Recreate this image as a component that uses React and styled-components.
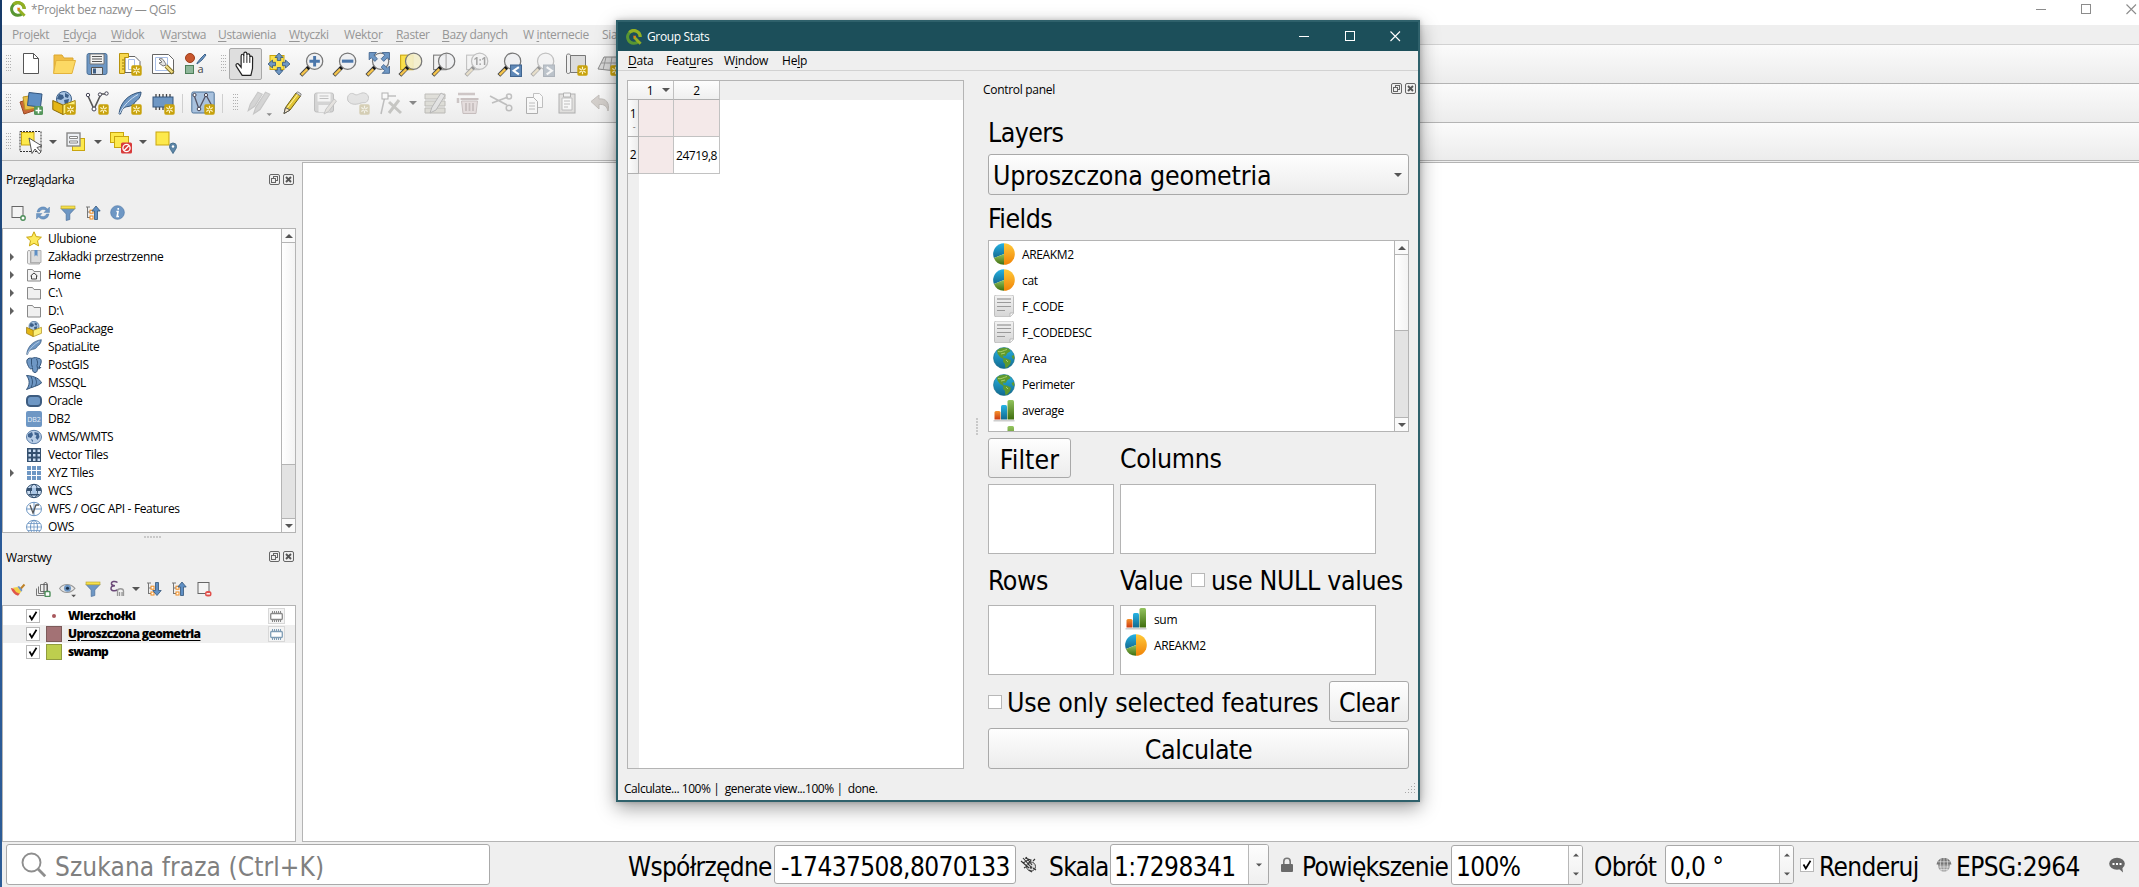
import React from "react";
import styled, { createGlobalStyle, css } from "styled-components";

const Global = createGlobalStyle`
  *, *::before, *::after { box-sizing: border-box; }
  html, body { margin: 0; padding: 0; overflow: hidden; }
  body { font-family: "Open Sans", "Noto Sans", sans-serif; font-size: 12px; color: #000; letter-spacing: -0.35px; }
  svg { display: block; flex: none; }
`;

const BIG = `"DejaVu Sans Condensed", "DejaVu Sans", sans-serif`;

/* ---------- main window ---------- */
const Desktop = styled.div`
  position: relative;
  width: 2139px;
  height: 887px;
  padding-left: 2px;
  overflow: hidden;
  background: linear-gradient(#173a68, #1f4a80 30%, #2a5a98 60%, #2c5c96);
`;
const MainWindow = styled.div`
  display: flex;
  flex-direction: column;
  height: 887px;
  background: #efefef;
`;
const TitleBar = styled.header`
  display: flex;
  align-items: center;
  height: 25px;
  padding: 0 2px 7px 8px;
  background: #fff;
  color: #8c8c8c;
  gap: 5px;
  white-space: nowrap;
`;
const WindowButtons = styled.div`
  display: flex;
  gap: ${(p) => p.$gap}px;
  margin-left: auto;
`;
const MenuBar = styled.nav`
  flex: none;
  display: flex;
  align-items: center;
  height: 20px;
  padding-left: 10px;
  border-bottom: 1px solid #d2d2d2;
  color: ${(p) => p.$color || "#969696"};
`;
const MenuItem = styled.span`
  flex: none;
  width: ${(p) => p.$w}px;
  white-space: nowrap;
  letter-spacing: ${(p) => p.$ls ?? -0.35}px;
  u { text-underline-offset: 2px; }
`;
const ToolRow = styled.div`
  display: flex;
  align-items: center;
  height: ${(p) => p.$h || 39}px;
  padding-left: 4px;
  border-bottom: 1px solid #b4b4b4;
  background: linear-gradient(#fbfbfb, #ececec);
`;
const Grip = styled.i`
  flex: none;
  width: 5px;
  height: 18px;
  margin-left: ${(p) => p.$ml || 0}px;
  margin-right: ${(p) => p.$mr || 0}px;
  background-image: radial-gradient(circle at 0.5px 0.5px, #b0b0b0 0.7px, transparent 0.8px);
  background-size: 2px 3px;
`;
const ToolButton = styled.span`
  flex: none;
  display: flex;
  align-items: center;
  justify-content: center;
  width: ${(p) => p.$w || 33}px;
  height: 32px;
  ${(p) => p.$faded && css`opacity: 0.42; filter: grayscale(0.6);`}
  ${(p) => p.$active && css`
    background: #dedede; border: 1px solid #a8a8a8; border-radius: 2px;
  `}
`;
const Separator = styled.i`
  flex: none;
  width: 1px;
  height: 19px;
  margin: 0 ${(p) => p.$m || 3}px;
  background: #cfcfcf;
`;
const Arrow = styled.i`
  flex: none;
  width: 0;
  height: 0;
  border: ${(p) => p.$s || 4}px solid transparent;
  border-top-color: ${(p) => (p.$up ? "transparent" : p.$c || "#555")};
  border-bottom-color: ${(p) => (p.$up ? p.$c || "#555" : "transparent")};
  transform: translateY(${(p) => (p.$up ? "-25%" : "25%")});
`;
const ArrowSlot = styled.span`
  flex: none;
  display: flex;
  align-items: center;
  justify-content: center;
  width: ${(p) => p.$w}px;
`;
const Workspace = styled.div`
  flex: 1;
  display: flex;
  min-height: 0;
`;
const LeftDock = styled.aside`
  display: flex;
  flex-direction: column;
  width: 300px;
  height: 681px;
`;
const Canvas = styled.main`
  flex: 1;
  height: 680px;
  margin-top: 1px;
  background: #fff;
  border: 1px solid #b4b4b4;
  border-right: 0;
`;
const DockTitle = styled.div`
  flex: none;
  display: flex;
  align-items: center;
  height: ${(p) => p.$h}px;
  padding: 0 ${(p) => p.$pr ?? 8}px 0 ${(p) => p.$pl ?? 4}px;
  letter-spacing: ${(p) => p.$ls ?? -0.35}px;
  span { margin-right: auto; padding-top: 1px; }
  svg + svg { margin-left: 3px; }
`;
const DockTools = styled.div`
  flex: none;
  display: flex;
  align-items: center;
  height: ${(p) => p.$h || 32}px;
  padding-left: 3px;
  ${ToolButton} { width: 25px; }
`;
const TreeBox = styled.div`
  flex: none;
  display: flex;
  width: 294px;
  height: ${(p) => p.$h}px;
  border: 1px solid #b4b4b4;
  background: #fff;
  overflow: hidden;
`;
const TreeList = styled.ul`
  flex: 1;
  margin: 0;
  padding: 1px 0 0;
  list-style: none;
  overflow: hidden;
`;
const TreeRow = styled.li`
  display: flex;
  align-items: center;
  height: 18px;
  padding-left: 7px;
  white-space: nowrap;
  > span { margin-left: 6px; padding-bottom: 1px; line-height: 16px; }
`;
const Expander = styled.i`
  flex: none;
  width: 16px;
  height: 8px;
  &::before {
    content: "";
    display: block;
    width: 0;
    border: 4px solid transparent;
    border-left-color: ${(p) => (p.$show ? "#606060" : "transparent")};
  }
`;
const ScrollBar = styled.div`
  flex: none;
  display: flex;
  flex-direction: column;
  width: 14px;
  border-left: 1px solid #b4b4b4;
  background: #e3e3e3;
`;
const ScrollEnd = styled.i`
  display: flex;
  align-items: center;
  justify-content: center;
  height: 14px;
  background: #fafafa;
  border-${(p) => (p.$up ? "bottom" : "top")}: 1px solid #b4b4b4;
`;
const Thumb = styled.i`
  height: ${(p) => p.$h}px;
  margin-bottom: auto;
  background: linear-gradient(90deg, #fff, #f3f3f3);
  border-bottom: 1px solid #b4b4b4;
`;
const SplitDots = styled.div`
  flex: none;
  height: 7px;
  display: flex;
  justify-content: center;
  align-items: center;
  &::before {
    content: "";
    width: 17px;
    height: 2px;
    background-image: radial-gradient(circle at 1px 1px, #c8c8c8 0.7px, transparent 0.9px);
    background-size: 3px 2px;
  }
`;
const LayerRow = styled.li`
  display: flex;
  align-items: center;
  height: 18px;
  padding: 0 10px 0 23px;
  font-weight: 700;
  white-space: nowrap;
  background: ${(p) => (p.$selected ? "#efefef" : "#fff")};
  > b { margin-left: 6px; margin-right: auto; padding-bottom: 1px; line-height: 16px; font-size: 12px; letter-spacing: ${(p) => p.$ls}px; text-decoration: ${(p) => (p.$selected ? "underline" : "none")}; text-underline-offset: 2px; }
`;
const Check = styled.i`
  flex: none;
  display: flex;
  align-items: center;
  justify-content: center;
  width: 14px;
  height: 14px;
  border: 1px solid #b8b8b8;
  background: #fff;
`;
const Swatch = styled.i`
  flex: none;
  width: 16px;
  height: 16px;
  margin-left: 6px;
  display: flex;
  align-items: center;
  justify-content: center;
  ${(p) => p.$color && css`background: ${p.$color}; border: 1px solid rgba(40, 40, 30, 0.3);`}
  &::before {
    content: "";
    display: ${(p) => (p.$color ? "none" : "block")};
    width: 4px; height: 4px; border-radius: 2px;
    background: #a8575c;
  }
`;
const ChipBox = styled.i`
  display: flex;
  align-items: center;
  justify-content: center;
  width: 17px;
  height: 16px;
  border: 1px solid #d8d8d8;
  background: #f4f4f4;
`;

/* ---------- status bar ---------- */
const StatusBar = styled.footer`
  display: flex;
  align-items: center;
  height: 45px;
  padding-left: 4px;
  font-family: ${BIG};
  font-stretch: condensed;
  font-size: 26px;
  white-space: nowrap;
`;
const SearchBox = styled.div`
  flex: none;
  display: flex;
  align-items: center;
  width: 484px;
  height: 41px;
  margin-right: 138px;
  padding-left: 14px;
  gap: 8px;
  border: 1px solid #aaa;
  border-radius: 3px;
  background: #fff;
  color: #808080;
  letter-spacing: 0.1px;
  > span { padding-top: 5px; }
`;
const StatusText = styled.span`
  flex: none;
  width: ${(p) => p.$w}px;
  padding-top: 5px;
  letter-spacing: ${(p) => p.$ls ?? -0.7}px;
`;
const StatusField = styled.div`
  flex: none;
  display: flex;
  align-items: center;
  width: ${(p) => p.$w}px;
  height: ${(p) => p.$h || 40}px;
  margin-right: ${(p) => p.$mr}px;
  padding-left: ${(p) => p.$pl ?? 5}px;
  border: 1px solid #a8a8a8;
  border-radius: 3px;
  background: #fff;
  overflow: hidden;
  > span { letter-spacing: ${(p) => p.$ls ?? -0.6}px; margin-right: auto; padding-top: 5px; }
`;
const FieldSide = styled.i`
  display: flex;
  flex-direction: column;
  align-items: center;
  justify-content: ${(p) => (p.$spin ? "space-around" : "center")};
  align-self: stretch;
  width: ${(p) => p.$w || 14}px;
  border-left: 1px solid #b8b8b8;
  background: linear-gradient(#fdfdfd, #efefef);
`;
const IconSlot = styled.span`
  flex: none;
  display: flex;
  align-items: center;
  width: ${(p) => p.$w}px;
`;

/* ---------- dialog ---------- */
const Dialog = styled.section`
  position: absolute;
  left: 616px;
  top: 20px;
  width: 804px;
  height: 782px;
  display: flex;
  flex-direction: column;
  border: 2px solid #2f616b;
  background: #efefef;
  box-shadow: 0 6px 18px rgba(0, 0, 0, 0.38), 0 0 5px rgba(0, 0, 0, 0.2);
`;
const DialogTitle = styled.header`
  flex: none;
  display: flex;
  align-items: center;
  height: 29px;
  padding: 0 17px 0 8px;
  gap: 5px;
  background: #1c4f5a;
  color: #fff;
`;
const DialogBody = styled.div`
  flex: 1;
  display: flex;
  min-height: 0;
`;
const TableFrame = styled.div`
  flex: none;
  width: 337px;
  height: 689px;
  margin: 9px 0 0 9px;
  border: 1px solid #b4b4b4;
  background: linear-gradient(90deg, #efefef 11px, #fff 11px);
`;
const HeaderStrip = styled.div`
  display: flex;
  height: 19px;
  background: #efefef;
`;
const HeadCell = styled.div`
  display: flex;
  align-items: center;
  justify-content: center;
  gap: 9px;
  width: ${(p) => p.$w}px;
  padding-left: ${(p) => p.$pl || 0}px;
  background: linear-gradient(#fdfdfd, #efefef);
  border-right: 1px solid #c0c0c0;
  border-bottom: 1px solid #b0b0b0;
`;
const TableRow = styled.div`
  display: flex;
  height: 37px;
`;
const RowHead = styled.div`
  display: flex;
  flex-direction: column;
  align-items: center;
  justify-content: center;
  width: 11px;
  line-height: 16px;
  background: linear-gradient(90deg, #fdfdfd, #ececec);
  border-right: 1px solid #b0b0b0;
  border-bottom: 1px solid #b0b0b0;
  small { height: 8px; font-size: 9px; line-height: 9px; padding-left: 2px; color: #666; }
`;
const Cell = styled.div`
  display: flex;
  align-items: center;
  justify-content: center;
  width: ${(p) => p.$w}px;
  background: ${(p) => (p.$blank ? "#f4e9e9" : "#fff")};
  border-right: 1px solid #c2c2c2;
  border-bottom: 1px solid #c2c2c2;
  letter-spacing: -0.5px;
`;
const DockSplitter = styled.div`
  display: flex;
  align-items: center;
  justify-content: center;
  width: 19px;
  padding: 4px 0 0 6px;
  &::before {
    content: "";
    width: 2px;
    height: 17px;
    background-image: radial-gradient(circle at 1px 1px, #c8c8c8 0.7px, transparent 0.9px);
    background-size: 2px 3px;
  }
`;
const Panel = styled.div`
  flex: 1;
  display: flex;
  flex-direction: column;
`;
const PanelForm = styled.div`
  display: flex;
  flex-direction: column;
  padding: 0 9px 0 5px;
  font-family: ${BIG};
  font-stretch: condensed;
  font-size: 26.5px;
`;
const Heading = styled.div`
  display: flex;
  align-items: center;
  flex: none;
  height: ${(p) => p.$h}px;
  padding-top: ${(p) => p.$pt ?? 3}px;
  line-height: 1;
  white-space: nowrap;
  letter-spacing: ${(p) => p.$ls ?? -0.5}px;
`;
const Button = styled.div`
  flex: none;
  display: flex;
  align-items: center;
  justify-content: center;
  width: ${(p) => p.$w}px;
  height: ${(p) => p.$h || 41}px;
  margin-left: ${(p) => (p.$push ? "auto" : "0")};
  padding-top: 2px;
  border: 1px solid #a9a9a9;
  border-radius: 3px;
  background: linear-gradient(#fefefe, #ececec);
  letter-spacing: ${(p) => p.$ls ?? -0.45}px;
`;
const Combo = styled(Button)`
  justify-content: space-between;
  padding: 1px 6px 0 4px;
`;
const FieldList = styled.div`
  flex: none;
  display: flex;
  width: ${(p) => p.$w}px;
  height: ${(p) => p.$h}px;
  border: 1px solid #b4b4b4;
  background: #fff;
  font-family: "Open Sans", "Noto Sans", sans-serif;
  font-stretch: normal;
  font-size: 12px;
  overflow: hidden;
`;
const FieldItems = styled.div`
  flex: 1;
  padding: 0 0 0 4px;
`;
const FieldItem = styled.div`
  display: flex;
  align-items: center;
  gap: 7px;
  height: 26.1px;
`;
const FormRow = styled.div`
  display: flex;
  align-items: center;
  gap: ${(p) => p.$gap || 0}px;
  margin-top: ${(p) => p.$mt || 0}px;
`;
const FieldCol = styled.div`
  flex: none;
  display: flex;
  width: 132px;
`;
const ValueCol = styled(FieldCol)`
  width: 71px;
`;
const DialogStatus = styled.footer`
  flex: none;
  display: flex;
  align-items: center;
  justify-content: space-between;
  height: 22px;
  padding: 0 2px 1px 6px;
  white-space: pre;
  letter-spacing: -0.45px;
`;

/* ---------- icons ---------- */
const BLUE = "#6e97c4";
const Svg = ({ s = 24, vb = 24, children }) => (
  <svg width={s} height={s} viewBox={`0 0 ${vb} ${vb}`} fill="none">{children}</svg>
);
const Star = ({ x = 13, y = 13 }) => (
  <g transform={`translate(${x} ${y})`}>
    <rect x=".3" y=".3" width="10.4" height="10.4" rx="1.6" fill="#c8a20c" />
    <path d="M5.5 1.8v7.4M2.3 3.6l6.4 3.8M8.7 3.6 2.3 7.4" stroke="#fff6c8" strokeWidth="1.2" />
    <circle cx="5.5" cy="5.5" r="1.1" fill="#c8a20c" />
  </g>
);
const QLogo = ({ s = 16 }) => (
  <Svg s={s} vb={16}>
    <path d="M12.6 12.2A6.3 6.3 0 1 1 14.2 8" stroke="#589632" strokeWidth="3" />
    <path d="M3.4 3.4A6.3 6.3 0 0 1 14.2 8" stroke="#93b023" strokeWidth="3" />
    <path d="M8 8l6.6 6.8" stroke="#93b023" strokeWidth="2.8" />
    <path d="M7 6.8h3.2L8.6 10z" fill="#ee7913" />
  </Svg>
);
const FilePage = () => (<Svg><path d="M4.500 1.500h10l5 5v15h-15z" fill="#fff" stroke="#555" /><path d="M14.500 1.500v5h5" stroke="#555" /></Svg>);
const Folder = () => (<Svg><path d="M2 21V3h8l2 3h9v4" fill="#f0bd45" stroke="#dba72f" /><path d="M1.500 21.500 4 8.500h19.500L20 21.500z" fill="#fcd964" stroke="#e3b33c" /></Svg>);
const Save = () => (<Svg><rect x="2" y="1.500" width="20" height="21" rx="2" fill={BLUE} stroke="#4d7299" /><path d="M5 2h14v10H5z" fill="#f4f4f4" stroke="#777" /><path d="M7 4.500h10M7 7h10M7 9.500h10" stroke="#555" /><path d="M6.500 15.500h11v7h-11z" fill="#dfe5ec" stroke="#555" /><path d="M8 16.500h3v5H8z" fill="#3f5f85" /></Svg>);
const Layout = () => (<Svg><path d="M7 4.500h10l5 5v11H7z" fill="#fff" stroke="#666" /><path d="M10.500 7.500h6v10h-6z" stroke="#a9bfe8" /><path d="M1.500 1.500h9v4h-4v16h-5z" fill="#f7d850" stroke="#b8930c" /><path d="M4 8h2M4 11h2M4 14h2M4 17h2" stroke="#9a7a08" /><Star /></Svg>);
const Manager = () => (<Svg><path d="M1.500 2.500h16l5 5v14h-21z" fill="#fff" stroke="#666" /><path d="M4.500 5.500h12v13h-12z" stroke="#a9bfe8" /><path d="M15 14l7 7" stroke="#7c6a1c" strokeWidth="4" /><path d="M15 14l6.500 6.500" stroke="#f0dc88" strokeWidth="2.400" /><path d="M8 7c3-1 4 0 5 2s2 2 2 4l-3 1-4-3 3-1z" fill="#e4e4e4" stroke="#777" /></Svg>);
const StyleMgr = () => (
  <Svg><circle cx="6" cy="6" r="4.500" fill="#c9572e" stroke="#9e3e1a" /><path d="M13 11l4-5 4-4 1 1-4 5-5 4z" fill={BLUE} stroke="#3f648c" /><rect x="1.500" y="13.500" width="8" height="8" fill="#8fb79a" stroke="#4d7f59" />
    <text x="13.500" y="20.500" fontFamily="Open Sans" fontSize="11" letterSpacing="0" fill="#444">a</text></Svg>
);
const Hand = () => (<Svg s={26}><path d="M8.500 22.500 3 14c-1-2 1-3 2-2l2.500 3V4.500c0-2 2.500-2 2.500 0V2.500c0-2 2.800-2 2.800 0V4c0-2 2.700-1.800 2.700 0v2c0-1.800 2.600-1.600 2.600.3L18 16l-1.500 6.500z" fill="#fff" stroke="#222" strokeWidth="1.100" /><path d="M10 4.500V11M12.800 4v7M15.500 6v5" stroke="#222" strokeWidth=".9" /></Svg>);
const Pan = () => (<Svg><rect x="3" y="3.500" width="14" height="14" fill="#fbe14a" stroke="#c9a50e" /><path d="M12 1l4 4.500h-2.300v3h-3.400v-3H8zM12 23l4-4.500h-2.300v-3h-3.400v3H8zM1 12l4.500-4v2.300h3v3.400h-3V16zM23 12l-4.500-4v2.300h-3v3.400h3V16z" fill={BLUE} stroke="#34557a" strokeWidth=".8" /></Svg>);
const Lens = ({ back, mark, tint = "#eef0f2", after }) => (
  <Svg s={25}>{back}<path d="M9 15 1.800 22.500" stroke="#444" strokeWidth="3.800" /><path d="M8 16.500 2.400 22" stroke="#f6c54c" strokeWidth="2.200" /><path d="M8 16l2-2" stroke="#111" strokeWidth="3.200" /><circle cx="15" cy="8.800" r="7.800" fill={tint} fillOpacity=".9" stroke="#777" strokeWidth="1.200" />{mark}{after}</Svg>
);
const ZoomIn = () => <Lens mark={<path d="M15 3.800v10M10 8.800h10" stroke="#4a76ab" strokeWidth="2.800" />} />;
const ZoomOut = () => <Lens mark={<path d="M9.500 8.800h11" stroke="#4a76ab" strokeWidth="3" />} />;
const ZoomFull = () => <Lens mark={<g fill={BLUE} stroke="#3d608a" strokeWidth=".8"><path d="M4 .500h7L8.500 3l3.500 3.500-2.500 2.500L6 5.500 4 7.500zM23.500.500h-7L19 3l-3.500 3.500L18 9l3.500-3.500 2 2zM23.500 20.500h-7L19 18l-3.500-3.500L18 12l3.500 3.500 2-2z" /></g>} />;
const ZoomSel = () => <Lens back={<rect x="2.500" y="3" width="12" height="14" fill="#fbe14a" stroke="#c9a50e" />} tint="#f3eecb" />;
const ZoomLayer = () => <Lens back={<rect x="2.500" y="3" width="12" height="14" fill="#f2f2f2" stroke="#777" />} mark={<path d="M14.500 2v14" stroke="#aaa" />} />;
const ZoomNative = () => <Lens back={<rect x="2.500" y="3" width="12" height="14" fill="#f2f2f2" stroke="#777" />} mark={<text x="9" y="12.500" fontFamily="Open Sans" fontWeight="700" fontSize="9.500" letterSpacing="-.3" fill="#333">1:1</text>} />;
const Chevron = ({ right }) => (<g><rect x="13" y="12.500" width="10.500" height="11" fill="#5f89b8" stroke="#41658f" /><path d={right ? "M16 14.500l5 3.500-5 3.500" : "M21 14.500l-5 3.500 5 3.500"} stroke="#fff" strokeWidth="2" /></g>);
const ZoomPrev = () => <Lens after={<Chevron />} />;
const ZoomNext = () => <Lens after={<Chevron right />} />;
const NewMap = () => (<Svg><path d="M5 3.500h16.500v17H5z" fill="#dcdcdc" stroke="#777" /><path d="M2.500 3.500c0-2 4-2 4 0V20c-1 2-4 2-4 0z" fill="#efefef" stroke="#777" /><Star x={13} y={13} /></Svg>);
const Mesh = () => (<Svg><path d="M1 17 7 5h16v8l-4 6z" fill="#d8d8d8" stroke="#888" /><path d="M4 11h18M9 5l-3 13M15 5l-2 13" stroke="#999" /><Star /></Svg>);
const DataSource = () => (<Svg><path d="M1 11l12-4 4 12-12 4z" fill="#c9673a" stroke="#9b4a22" /><path d="M4 6l12-2 2 13-12 2z" fill="#e9c04a" stroke="#b8921d" /><path d="M10 1.500 23 3l-1.500 13-13-1.500z" fill="#5f8fc4" stroke="#33557e" /><rect x="15" y="15" width="9" height="9" rx="1.500" fill="#56975c" /><path d="M19.500 16.500v6M16.500 19.500h6" stroke="#fff" strokeWidth="1.500" /></Svg>);
const GeoPack = ({ star = true, s }) => (<Svg s={s}><circle cx="12" cy="8" r="7.500" fill="#a9c5e4" stroke="#3d608a" /><path d="M7 3l4 1 1 3-3 2-4-1zM13 2l4 2-1 3-3-1zM12 9l5-1-1 5-3 1z" fill="#3d608a" /><path d="M.8 9.500 11 14v9.500L.8 18.500z" fill="#e4b616" stroke="#8a6a05" /><path d="M23.200 9.500 11 14v9.500l12.200-5z" fill="#fdf07a" stroke="#a8850c" />{star && <Star />}</Svg>);
const NewShape = () => (<Svg><path d="M3 5l6 13L16 3h6" stroke="#555" strokeWidth="1.600" /><g fill="#fff" stroke="#445" ><circle cx="3" cy="4" r="1.700" /><circle cx="9" cy="18" r="2" /><circle cx="15" cy="3.500" r="1.700" /><circle cx="21.500" cy="2.500" r="1.700" /></g><Star /></Svg>);
const Feather = ({ star = true, s }) => (<Svg s={s}><path d="M1 23C2 13 9 3 23 1c0 5-3 8-6 10-1 3-4 4-7 4.500C6 16 4 18 2.500 23z" fill={BLUE} stroke="#34557a" /><path d="M1.500 22.500C6 14 12 8 20 3.500" stroke="#cfe0f2" />{star && <Star />}</Svg>);
const Chip = () => (<Svg><path d="M5 3v16M8.500 3v16M12 3v16M15.500 3v16M19 3v16" stroke="#444" strokeWidth="1.300" /><rect x="2" y="6" width="20" height="10" fill={BLUE} stroke="#34557a" /><Star /></Svg>);
const Virtual = () => (<Svg><rect x=".8" y="1" width="22.400" height="21" rx="1.500" fill="#a9c2de" stroke="#4d7299" /><path d="M3 4l5 14L15 4l6 11" stroke="#556" strokeWidth="1.300" /><g fill="#fff" stroke="#445"><circle cx="3.500" cy="4" r="1.600" /><circle cx="8" cy="18" r="1.800" /><circle cx="15" cy="4" r="1.600" /></g><Star /></Svg>);
const Pencil = ({ c = "#e2c534" }) => (<Svg><path d="M4 22.500l1.500-6L16 2l4.500 3L10 19z" fill={c} stroke="#6c5d12" /><path d="M4 22.500l1.500-6L10 19z" fill="#f3e3c6" stroke="#555" /><path d="M16 2l4.500 3 .7-2-3.500-2.200z" fill="#ddd" stroke="#888" /><path d="M7.500 16.500 17.500 3.500" stroke="#fff6b0" /></Svg>);
const Pencils = () => (<Svg s={26}><path d="M2 19l2-6 7-11 4 2-7 11z" fill="#aaa" stroke="#888" /><path d="M7 22l2-6 9-14 4 2-9 14z" fill="#aaa" stroke="#888" /><path d="M19 21.500h5l-2.500 2.500z" fill="#000" /></Svg>);
const SaveEdit = () => (<Svg><rect x="1.500" y="2" width="19" height="19" rx="2" fill="#aaa" stroke="#777" /><path d="M4.500 2.500h13v8h-13z" fill="#f4f4f4" /><path d="M6.500 5h9M6.500 7.500h9" stroke="#777" /><path d="M5.500 14h11v7h-11z" fill="#eee" /><path d="M11 23l2-5 8-10 2.500 2-8 10.500z" fill="#d8cdb8" stroke="#888" /></Svg>);
const AddPoly = () => (<Svg><path d="M2 10c-2-6 3-9 6-7s4 0 8-1 8 3 6 7-4 2-7 3-9 3-13-2z" fill="#ccc" stroke="#888" /><Star /></Svg>);
const Vertex = () => (<Svg><path d="M2 23 6 5h11" stroke="#777" strokeWidth="1.500" /><rect x="3" y="2" width="6" height="6" fill="#fff" stroke="#555" /><path d="M10 22 20 9M10 11l12 11" stroke="#8b8b78" strokeWidth="3" /></Svg>);
const Attr = () => (<Svg><path d="M2 3h20v5H2zM2 10h20v5H2zM2 17h20v5H2z" fill="#c4c0a0" stroke="#77735a" /><path d="M7 22l2-6L18 2l4 2.500L13 19z" fill="#ccc" stroke="#666" /></Svg>);
const Trash = () => (<Svg><path d="M2 3h17M2 7v5" stroke="#a98080" strokeWidth="2.500" /><path d="M5.500 10h16l-1.500 12.500H7z" fill="#e6bcbc" stroke="#a57474" /><path d="M4.500 8h18M10 12v8M13.500 12v8M17 12v8" stroke="#a57474" strokeWidth="1.800" /></Svg>);
const Scissors = () => (<Svg><path d="M1 5l17 9M3 12l16-6" stroke="#777" strokeWidth="1.800" /><circle cx="20" cy="5.500" r="2.500" stroke="#777" strokeWidth="1.500" /><circle cx="20" cy="17" r="2.800" stroke="#777" strokeWidth="1.500" /></Svg>);
const Copy = () => (<Svg><path d="M11.500 2.500h6l3 3v11h-9z" fill="#fff" stroke="#777" /><path d="M4.500 6.500h7l4 4v12h-11z" fill="#fff" stroke="#555" /><path d="M7 12h6M7 15h6M7 18h6" stroke="#777" /></Svg>);
const Paste = () => (<Svg><rect x="4" y="3" width="16" height="19" fill="#ccc5bd" stroke="#555" /><path d="M7 7h10v12H7z" fill="#fff" stroke="#777" /><path d="M8.500 2h7v4h-7z" fill="#eee" stroke="#555" /><path d="M9 10h6M9 13h6M9 16h4" stroke="#777" /></Svg>);
const Undo = () => (<Svg><path d="M3 10.500 11 4v4c7-1 11 4 9 12-1-5-4-7-9-6.500V18z" fill="#b39b84" stroke="#8a745e" /></Svg>);
const SelectRect = () => (<Svg><rect x="1" y="1.500" width="21" height="20" stroke="#333" strokeDasharray="2 1" /><rect x="2.500" y="2.500" width="12.500" height="12.500" fill="#fde94c" stroke="#c9a50e" /><path d="M10 8l13 8-5 1.500 4 4.500-2 1.800-4-4.800-3 4.500z" fill="#fff" stroke="#555" /></Svg>);
const SelectForm = () => (<Svg><rect x="8.500" y="8.500" width="12" height="12" fill="#fde94c" stroke="#c9a50e" /><rect x="3" y="3" width="13" height="13" fill="#eef1f5" stroke="#888" strokeWidth="1.400" /><path d="M5.500 6.500h8v2h-8zM5.500 11h8v2h-8z" fill="#fff" stroke="#888" /></Svg>);
const Deselect = () => (<Svg><rect x="1.500" y="2.500" width="13" height="10" fill="#fde94c" stroke="#c9a50e" /><rect x="5.500" y="6.500" width="14" height="11" fill="#fde94c" stroke="#c9a50e" /><rect x="12" y="12.500" width="11" height="11" rx="1.500" fill="#d83a3a" /><circle cx="17.500" cy="18" r="3.600" stroke="#fff" strokeWidth="1.300" /><path d="M15 20.500l5-5" stroke="#fff" strokeWidth="1.300" /></Svg>);
const SelectLoc = () => (<Svg><rect x="2" y="2" width="13" height="13" fill="#fde94c" stroke="#c9a50e" /><path d="M19 23.500c-2-3.500-3.500-5-3.500-7a3.500 3.500 0 0 1 7 0c0 2-1.500 3.500-3.500 7z" fill="#5d86a8" stroke="#48708f" /><circle cx="19" cy="16.500" r="1.200" fill="#fff" /></Svg>);

const WinIcon = ({ kind, color }) => (
  <Svg s={11} vb={11}>
    {kind === "min" && <path d="M0 5.500h10" stroke={color} />}
    {kind === "max" && <rect x=".5" y=".5" width="9" height="9" stroke={color} />}
    {kind === "close" && <path d="M.5.500l9.500 9.500M10 .500.500 10" stroke={color} strokeWidth="1.100" />}
  </Svg>
);
const FloatIcon = () => (<Svg s={11} vb={11}><rect x=".5" y=".5" width="10" height="10" rx="1.500" stroke="#666" /><rect x="4.500" y="2.500" width="4" height="4" stroke="#666" /><rect x="2.500" y="4.500" width="4" height="4" fill="#efefef" stroke="#666" /></Svg>);
const CloseIcon = () => (<Svg s={11} vb={11}><rect x=".5" y=".5" width="10" height="10" rx="1.500" stroke="#666" /><path d="M3 3l5 5M8 3 3 8" stroke="#555" strokeWidth="1.900" /></Svg>);

const AddLayer = () => (<Svg s={16} vb={16}><rect x="2" y="1.500" width="11" height="11" fill="#f4f4f4" stroke="#666" /><circle cx="13" cy="13" r="2.200" fill="#fff" stroke="#4d8f5a" strokeWidth="1.400" /></Svg>);
const Refresh = () => (<Svg s={16} vb={16}><path d="M2 7a6 6 0 0 1 10.500-3L14.500 2v5.500H9l2-2A4 4 0 0 0 4.500 7zM14 9a6 6 0 0 1-10.500 3L1.500 14V8.500H7l-2 2A4 4 0 0 0 11.500 9z" fill={BLUE} stroke="#4f79a8" strokeWidth=".4" /></Svg>);
const Funnel = () => (<Svg s={16} vb={16}><path d="M1 3.500h14L9.800 9v5.500l-3.600 1V9z" fill={BLUE} stroke="#4a6f9a" strokeWidth=".7" /><rect x="1" y="1" width="14" height="2.800" fill="#f6e04b" stroke="#b5a02a" strokeWidth=".6" /></Svg>);
const TreeArrow = ({ down }) => (<Svg s={16} vb={16}><path d="M1 2h4M2.500 2v11M2.500 7h3M2.500 12.500h3" stroke="#777" /><rect x="5" y="5.200" width="3" height="3" fill="#fff" stroke="#ef8a1d" /><rect x="5" y="11" width="3" height="3" fill="#fff" stroke="#ef8a1d" /><path d={down ? "M11 14.500 6.800 9.500h2.700V1.500h3v8h2.700z" : "M11 1 6.800 6h2.700v8.500h3V6h2.700z"} fill="#5f8fc4" stroke="#34557a" strokeWidth=".8" /></Svg>);
const Info = () => (<Svg s={15} vb={16}><circle cx="8" cy="8" r="7.300" fill={BLUE} stroke="#4f79a8" strokeWidth=".7" /><path d="M8.800 3.300v1.800M6.800 7h1.800l-1 5.200h2" stroke="#fff" strokeWidth="1.700" /></Svg>);
const Brush = () => (<Svg s={16} vb={16}><path d="M10 8.500l4.500-5" stroke="#c08328" strokeWidth="2" /><path d="M.8 7 6 8l4 4.500L8 14.800C4.500 14 2 11 .8 7z" fill="#e0564a" /><path d="M3 6.800l4.500-.8 3.800 4.200-1.600 2.600L6 11z" fill="#f2d047" /><path d="M7.500 5.800 9 5l3.500 4-1.200 1.700z" fill="#6f94c0" /></Svg>);
const AddGroup = () => (<Svg s={16} vb={16}><path d="M1.500 7.500v7h8M3.500 5.500v7h7M5.500 3.500v7h7v-7z" stroke="#777" /><path d="M9 12V3c0-2 3-2 3 0v8" stroke="#555" /><rect x="10" y="10.500" width="5" height="5" rx="1" fill="#fff" stroke="#4d8f5a" strokeWidth="1.400" /></Svg>);
const Eye = () => (<Svg s={17} vb={16}><path d="M.5 7C4 2 11 2 15 7c-4 5-11 5-14.500 0z" fill="#e8e8e8" stroke="#999" /><circle cx="8" cy="6.800" r="3.300" fill={BLUE} /><circle cx="8" cy="6.800" r="1.500" fill="#1c2f45" /><path d="M11.500 13h4.500l-2.200 2.400z" fill="#555" /></Svg>);
const Epsilon = () => (<Svg s={18} vb={18}><path d="M8.500 2.500C6 .5 2 1.500 2.500 4c.3 1.300 1.800 1.700 3.500 1.700C4 5.700 2 6.500 2 8.400c0 2.600 4.300 3 6.600 1.300" stroke="#6b4a78" strokeWidth="1.500" /><path d="M8.500 16V11c0-3 6-3 6 0v5M10.500 12v4M13 12v4" stroke="#999" strokeWidth="1.300" /></Svg>);
const RemoveLayer = () => (<Svg s={16} vb={16}><rect x="2" y="1.500" width="11" height="11" fill="#f4f4f4" stroke="#666" /><rect x="9" y="10" width="6.500" height="5.500" rx="2.500" fill="#e0504c" /><path d="M10.500 12.800h3.500" stroke="#fff" strokeWidth="1.400" /></Svg>);
const MemChip = ({ c }) => (<Svg s={13} vb={13}><path d="M2.500 1v11M4.500 1v11M6.500 1v11M8.500 1v11M10.500 1v11" stroke={c} /><rect x=".7" y="3.500" width="11.600" height="6" rx="1" fill="#fff" stroke={c} strokeWidth="1.300" /></Svg>);
const Tick = () => (<Svg s={10} vb={10}><path d="M1.500 4.500l2.300 4L8.500.800" stroke="#000" strokeWidth="1.700" /></Svg>);

const treeIcons = {
  star: <path d="M8 .8l2.200 4.800 5.200.6-3.900 3.500 1.100 5.200L8 12.300l-4.600 2.600 1.100-5.200L.6 6.200l5.200-.6z" fill="#fdea5c" stroke="#c9a50e" />,
  book: <g><path d="M5 1.500h10v12H5z" fill="#dcdcdc" stroke="#b5b5b5" /><path d="M1.500 2.500c0-1.300 3-1.300 3 0v11.500h9v1h-11l-1-1z" fill="#ececec" stroke="#aaa" /><path d="M8.500 1h3v6.500L10 6 8.500 7.500z" fill="#5f8fc4" /></g>,
  home: <g><path d="M1.500 2.500h5l1.500 2h6.500v9.500h-13z" fill="#f4f4f4" stroke="#888" /><path d="M4.500 9 8 6l3.500 3M5.500 8.500v3.500h5V8.500" stroke="#444" /></g>,
  dir: <path d="M1.500 2.500h5l1.500 2h6.500v9.500h-13z" fill="#f0f0f0" stroke="#888" />,
  pg: <g><path d="M1 3C2 1 4 .8 6 1.300 8 .3 11 .5 12 1.300c3 0 3.700 2 3 4.700-.5 2-1.200 3.500-2.200 4.500h2c-.8 1.300-2 1.500-3.300 1.200-.2 2-.5 3.800-2.500 3.800-2.200 0-2.500-2-2.500-4.500-1.500 2-3 .5-4-1.500C1.300 7 .3 5 1 3z" fill={BLUE} stroke="#34557a" /><path d="M5.500 2v5.500l1 3M10.500 2c1 2 1.500 4 .5 6.500l.5 3" stroke="#34557a" /></g>,
  sql: <path d="M.5.500C9 1 14 4 15.500 8 12 11 6 12 .5 14.500 4 10 4 5 .5.500zM5 1.500c2 4 2 7 0 11M9 3c2 3 2 6 0 8" fill={BLUE} stroke="#34557a" />,
  ora: <rect x="1" y="3" width="14" height="10" rx="3.500" fill={BLUE} stroke="#3d5c80" strokeWidth="2" />,
  db2: <g><rect x="0" y="0" width="16" height="16" rx="2" fill={BLUE} /><text x="1.200" y="10.500" fontFamily="Open Sans" fontSize="7" letterSpacing="0" fill="#e8f0fa">DB2</text></g>,
  wms: <g><ellipse cx="8" cy="8" rx="7.500" ry="6.700" fill="#b8cde6" stroke="#5c7fa8" /><path d="M2 5l4-2 1 3-2 3-3-1zM8.500 3l4 1 1 4-2 3-2-2.500 1-2-2-1zM5 10l2 1-.5 2.500z" fill="#3f6390" /></g>,
  vt: <g><rect x="1" y="1" width="14" height="14" fill="#34506f" /><path d="M2.500 2.500h2.500v2.500H2.500zM7 2.500h2.500v2.500H7zM11.500 2.500H14v2.500h-2.500zM2.500 7h2.500v2.500H2.500zM7 7h2.500v2.500H7zM11.500 7H14v2.500h-2.500zM2.500 11.500h2.500V14H2.500zM7 11.500h2.500V14H7zM11.500 11.500H14V14h-2.500z" fill="#c9dcf2" /></g>,
  xyz: <path d="M1 1h4v4H1zM6 1h4v4H6zM11 1h4v4h-4zM1 6h4v4H1zM6 6h4v4H6zM11 6h4v4h-4zM1 11h4v4H1zM6 11h4v4H6zM11 11h4v4h-4z" fill={BLUE} />,
  wcs: <g><ellipse cx="8" cy="8" rx="7.500" ry="6.700" fill="#c9dcf2" stroke="#34506f" /><path d="M1 5h14v3H1zM2.500 11h11v1.500h-11z" fill="#34506f" /><ellipse cx="8" cy="8" rx="3.500" ry="6.700" stroke="#34506f" /><path d="M6 5h4v6H6z" fill="#a9c5e4" /></g>,
  wfs: <g><ellipse cx="8" cy="8" rx="7.500" ry="6.700" fill="#fff" stroke={BLUE} /><path d="M1 8h14M8 1v14" stroke={BLUE} /><path d="M4 4l3 8 3-8h3" stroke="#555" strokeWidth="1.300" /></g>,
  ows: <g><ellipse cx="8" cy="8" rx="7.500" ry="6.700" fill="#fff" stroke={BLUE} /><ellipse cx="8" cy="8" rx="3.500" ry="6.700" stroke={BLUE} /><path d="M1 8h14M8 1v14M2 4.500h12M2 11.500h12" stroke={BLUE} strokeWidth=".8" /></g>,
};

const Gradients = () => (
  <svg width="0" height="0" style={{ position: "absolute" }}>
    <defs>
      <linearGradient id="gO" x2="0" y2="1"><stop stopColor="#ffca3a" /><stop offset="1" stopColor="#f08307" /></linearGradient>
      <linearGradient id="gB" x2="0" y2="1"><stop stopColor="#26b3e4" /><stop offset="1" stopColor="#136a90" /></linearGradient>
      <linearGradient id="gG" x2="0" y2="1"><stop stopColor="#93c45e" /><stop offset="1" stopColor="#3f6d0e" /></linearGradient>
      <linearGradient id="gR" x2="0" y2="1"><stop stopColor="#f5932c" /><stop offset="1" stopColor="#cc3a12" /></linearGradient>
      <linearGradient id="gP" x2="0" y2="1"><stop stopColor="#f3f3f3" /><stop offset="1" stopColor="#d6d6d6" /></linearGradient>
    </defs>
  </svg>
);
const Pie = () => (<Svg s={22} vb={22}><path d="M11 .2a10.800 10.800 0 0 1 0 21.600z" fill="url(#gO)" /><path d="M11 .2A10.800 10.800 0 0 0 .9 15L11 11z" fill="url(#gB)" /><path d="M.9 15A10.800 10.800 0 0 0 11 21.800V11z" fill="url(#gG)" /></Svg>);
const Doc = () => (<Svg s={22} vb={22}><path d="M1.500 1.500q0-1.500 1.500-1.500h16q1.500 0 1.500 1.500v17l-3.500 3.300H3q-1.500 0-1.500-1.500z" fill="url(#gP)" stroke="#b8b8b8" strokeWidth=".9" /><path d="M4 4h14" stroke="#b5b5b5" strokeWidth="1.900" /><path d="M4 7.500h14M4 11.500h14M4 15.500h8" stroke="#9a9a9a" /><path d="M17 21.500v-3.500h3.500" fill="#fff" stroke="#b8b8b8" /></Svg>);
const Earth = () => (<Svg s={22} vb={22}><circle cx="11" cy="11" r="10.500" fill="url(#gB)" stroke="#1a6c86" strokeWidth=".6" /><path d="M4 3.500C7 .5 12 0 16 1.700l1.500 2.600-3 1.700-2 3-2.500-.6.500 2.600 3 .5 4.500 2-.8 3.500-3 3.500-1.800.5-.5-4L10 14.500l.5-2.500L7 10 4.500 6.500z" fill="#5f9a2e" /><path d="M5 4.500c3 1 5-1 9-2M8 7l4-1M13 13l2 2" stroke="#a9cf6c" /><path d="M18.500 9l2.500-1 .3 3.500-1.300.5z" fill="#5f9a2e" /></Svg>);
const Bars = () => (<Svg s={22} vb={22}><path d="M1.500 12.500q0-1.500 1.500-1.500h3Q7.500 11 7.500 12.500V19.500h-6z" fill="url(#gR)" /><path d="M8 6.500Q8 5 9.500 5h3Q14 5 14 6.500v13H8z" fill="url(#gB)" /><path d="M14.500 1.500Q14.500 0 16 0h3.500q1.500 0 1.500 1.500v18h-6.500z" fill="url(#gG)" /><path d="M.5 20.800h21" stroke="#c6c6c6" strokeWidth="1.300" /></Svg>);
const Mouse = () => (<Svg s={17} vb={17}><circle cx="11" cy="10.500" r="4.500" fill="#ddd" stroke="#444" /><path d="M3 2l8 9M6 1l6 8M1 5l8 7M13 5l2-2M5 2l6 2-3 5M3 7l5-3M4 12l3-2M13 12l3 2M9 14l3 2" stroke="#333" strokeWidth="1.100" /><circle cx="11" cy="11.500" r="1.300" fill="#444" /></Svg>);
const Lock = () => (<Svg s={15} vb={15}><path d="M3.800 8V4.500c0-4.300 6.400-4.300 6.400 0V8" stroke="#777" strokeWidth="1.600" /><rect x="1" y="7" width="12" height="8" rx="1" fill="#6a6a6a" /></Svg>);
const Crs = () => (<Svg s={16} vb={16}><ellipse cx="8" cy="8" rx="6" ry="6.800" fill="#9a9a9a" /><path d="M.5 7.500C1.500 3 4.500 1 8 1s6.500 2 7.500 6.500z" fill="#757575" /><path d="M2 4.800h12M2.500 10h11M4 12.500h8M5 2c-1 5-1 8 1 12M11 2c1 5 1 8-1 12M8 1v14" stroke="#e5e5e5" strokeWidth=".7" /></Svg>);
const Bubble = () => (<Svg s={16} vb={16}><ellipse cx="8" cy="6.800" rx="7.800" ry="6" fill="#666" /><path d="M8 10l6 5.500-1-7z" fill="#666" /><path d="M3.500 7h2M7 7h2M10.500 7h2" stroke="#fff" strokeWidth="1.800" /></Svg>);
const SearchIcon = () => (<Svg s={26} vb={26}><circle cx="10.500" cy="10.500" r="9" stroke="#8e8e8e" strokeWidth="1.900" /><path d="M16.800 16.800l7.400 7.400" stroke="#8e8e8e" strokeWidth="2.800" /></Svg>);
const SizeGrip = () => (<Svg s={11} vb={11}>{[[9, 0], [6, 3], [9, 3], [3, 6], [6, 6], [9, 6], [0, 9], [3, 9], [6, 9], [9, 9]].map(([x, y]) => <rect key={`${x}-${y}`} x={x} y={y} width="1" height="1" fill="#a8a8a8" />)}</Svg>);

/* ---------- data ---------- */
const mainMenu = [
  [<>Projekt</>, 51], [<><u>E</u>dycja</>, 48], [<><u>W</u>idok</>, 49], [<>W<u>a</u>rstwa</>, 58],
  [<><u>U</u>stawienia</>, 71], [<><u>W</u>tyczki</>, 55], [<>Wekt<u>o</u>r</>, 52], [<><u>R</u>aster</>, 46],
  [<><u>B</u>azy danych</>, 81], [<>W <u>i</u>nternecie</>, 79], [<>Siatka</>, 60],
];
const dialogMenu = [[<><u>D</u>ata</>, 38], [<>Feat<u>u</u>res</>, 58], [<>W<u>i</u>ndow</>, 58], [<>He<u>l</u>p</>, 40]];
const browser = [
  ["star", "Ulubione"], ["book", "Zakładki przestrzenne", 1], ["home", "Home", 1], ["dir", "C:\\", 1], ["dir", "D:\\", 1],
  ["gpkg", "GeoPackage"], ["lite", "SpatiaLite"], ["pg", "PostGIS"], ["sql", "MSSQL"], ["ora", "Oracle"], ["db2", "DB2"],
  ["wms", "WMS/WMTS"], ["vt", "Vector Tiles"], ["xyz", "XYZ Tiles", 1], ["wcs", "WCS"], ["wfs", "WFS / OGC API - Features"], ["ows", "OWS"],
];
const fields = [
  [Pie, "AREAKM2"], [Pie, "cat"], [Doc, "F_CODE"], [Doc, "F_CODEDESC"], [Earth, "Area"], [Earth, "Perimeter"], [Bars, "average"], [Bars, ""],
];

const TreeIcon = ({ name }) => {
  if (name === "gpkg") return <GeoPack star={false} s={16} />;
  if (name === "lite") return <Feather star={false} s={16} />;
  return <Svg s={16} vb={16}>{treeIcons[name]}</Svg>;
};
const Tools = ({ icons, faded }) => icons.map((Icon, i) => <ToolButton key={i} $faded={faded}><Icon /></ToolButton>);
const Spin = () => (<FieldSide $spin><Arrow $up $s={3.5} /><Arrow $s={3.5} /></FieldSide>);
const Scroll = ({ thumb }) => (
  <ScrollBar><ScrollEnd $up><Arrow $up /></ScrollEnd><Thumb $h={thumb} /><ScrollEnd><Arrow /></ScrollEnd></ScrollBar>
);

function GroupStats() {
  return (
    <Dialog>
      <DialogTitle>
        <QLogo />Group Stats
        <WindowButtons $gap={34.5}><WinIcon kind="min" color="#fff" /><WinIcon kind="max" color="#fff" /><WinIcon kind="close" color="#fff" /></WindowButtons>
      </DialogTitle>
      <MenuBar $color="#000">{dialogMenu.map(([t, w], i) => <MenuItem key={i} $w={w} $ls={-0.2}>{t}</MenuItem>)}</MenuBar>
      <DialogBody>
        <TableFrame>
          <HeaderStrip>
            <HeadCell $w={46} $pl={16}>1<Arrow /></HeadCell>
            <HeadCell $w={46}>2</HeadCell>
          </HeaderStrip>
          <TableRow><RowHead>1<small>-</small></RowHead><Cell $w={35} $blank /><Cell $w={46} $blank /></TableRow>
          <TableRow><RowHead>2</RowHead><Cell $w={35} $blank /><Cell $w={46}>24719,8</Cell></TableRow>
        </TableFrame>
        <DockSplitter />
        <Panel>
          <DockTitle $h={35} $pl={0} $pr={2} $ls={-0.3}><span>Control panel</span><FloatIcon /><CloseIcon /></DockTitle>
          <PanelForm>
            <Heading $h={48} $pt={6} $ls={-0.6}>Layers</Heading>
            <Combo $w={421} $ls={-0.15}><span>Uproszczona geometria</span><Arrow /></Combo>
            <Heading $h={45} $pt={4}>Fields</Heading>
            <FieldList $w={421} $h={192}>
              <FieldItems>{fields.map(([Icon, t]) => <FieldItem key={t}><Icon />{t}</FieldItem>)}</FieldItems>
              <Scroll thumb={76} />
            </FieldList>
            <FormRow $mt={6}><FieldCol><Button $w={83} $h={40} $ls={0.1}>Filter</Button></FieldCol><Heading $h={40} $ls={-0.3}>Columns</Heading></FormRow>
            <FormRow $mt={6} $gap={6}><FieldList $w={126} $h={70} /><FieldList $w={256} $h={70} /></FormRow>
            <FormRow><FieldCol><Heading $h={51}>Rows</Heading></FieldCol><ValueCol><Heading $h={51}>Value</Heading></ValueCol><FormRow $gap={6}><Check /><Heading $h={51} $ls={-0.33}>use NULL values</Heading></FormRow></FormRow>
            <FormRow $gap={6}>
              <FieldList $w={126} $h={70} />
              <FieldList $w={256} $h={70}><FieldItems><FieldItem><Bars />sum</FieldItem><FieldItem><Pie />AREAKM2</FieldItem></FieldItems></FieldList>
            </FormRow>
            <FormRow $mt={6} $gap={5}><Check /><Heading $h={41} $ls={-0.2}>Use only selected features</Heading><Button $push $w={80}>Clear</Button></FormRow>
            <FormRow $mt={6}><Button $w={421}>Calculate</Button></FormRow>
          </PanelForm>
        </Panel>
      </DialogBody>
      <DialogStatus>{"Calculate... 100% |  generate view...100% |  done."}<SizeGrip /></DialogStatus>
    </Dialog>
  );
}

export default function App() {
  return (
    <Desktop>
      <Global />
      <Gradients />
      <MainWindow>
        <TitleBar>
          <QLogo />*Projekt bez nazwy — QGIS
          <WindowButtons $gap={34}><WinIcon kind="min" color="#8c8c8c" /><WinIcon kind="max" color="#8c8c8c" /><WinIcon kind="close" color="#8c8c8c" /></WindowButtons>
        </TitleBar>
        <MenuBar>{mainMenu.map(([t, w], i) => <MenuItem key={i} $w={w}>{t}</MenuItem>)}</MenuBar>
        <ToolRow>
          <Grip $mr={3} />
          <Tools icons={[FilePage, Folder, Save, Layout, Manager, StyleMgr]} />
          <Grip $ml={9} $mr={3} />
          <ToolButton $active><Hand /></ToolButton>
          <Tools icons={[Pan, ZoomIn, ZoomOut, ZoomFull, ZoomSel, ZoomLayer]} />
          <Tools icons={[ZoomNative]} faded />
          <Tools icons={[ZoomPrev]} />
          <Tools icons={[ZoomNext]} faded />
          <Tools icons={[NewMap, Mesh]} />
        </ToolRow>
        <ToolRow>
          <Grip $mr={3} />
          <Tools icons={[DataSource, GeoPack, NewShape, Feather, Chip]} />
          <Separator $m={3} />
          <ToolButton><Virtual /></ToolButton>
          <Separator $m={3} />
          <Grip $ml={7} $mr={4} />
          <ToolButton $faded><Pencils /></ToolButton>
          <ToolButton><Pencil /></ToolButton>
          <Tools icons={[SaveEdit, AddPoly, Vertex]} faded />
          <ArrowSlot $w={11}><Arrow $c="#888" /></ArrowSlot>
          <Tools icons={[Attr, Trash, Scissors, Copy, Paste, Undo]} faded />
        </ToolRow>
        <ToolRow $h={38}>
          <Grip $mr={3} />
          <ToolButton><SelectRect /></ToolButton><ArrowSlot $w={12}><Arrow /></ArrowSlot>
          <ToolButton><SelectForm /></ToolButton><ArrowSlot $w={12}><Arrow /></ArrowSlot>
          <ToolButton><Deselect /></ToolButton><ArrowSlot $w={12}><Arrow /></ArrowSlot>
          <ToolButton><SelectLoc /></ToolButton>
        </ToolRow>
        <Workspace>
          <LeftDock>
            <DockTitle $h={36}><span>Przeglądarka</span><FloatIcon /><CloseIcon /></DockTitle>
            <DockTools $h={31}><Tools icons={[AddLayer, Refresh, Funnel, TreeArrow, Info]} /></DockTools>
            <TreeBox $h={305}>
              <TreeList>
                {browser.map(([icon, label, open]) => (
                  <TreeRow key={label}><Expander $show={open} /><TreeIcon name={icon} /><span>{label}</span></TreeRow>
                ))}
              </TreeList>
              <Scroll thumb={222} />
            </TreeBox>
            <SplitDots />
            <DockTitle $h={33}><span>Warstwy</span><FloatIcon /><CloseIcon /></DockTitle>
            <DockTools>
              <Tools icons={[Brush, AddGroup, Eye, Funnel, Epsilon]} />
              <ArrowSlot $w={11}><Arrow /></ArrowSlot>
              <ToolButton><TreeArrow down /></ToolButton><ToolButton><TreeArrow /></ToolButton><ToolButton><RemoveLayer /></ToolButton>
            </DockTools>
            <TreeBox $h={237}>
              <TreeList>
                <LayerRow $ls={-0.65}><Check><Tick /></Check><Swatch /><b>Wierzchołki</b><ChipBox><MemChip c="#888" /></ChipBox></LayerRow>
                <LayerRow $selected $ls={-0.62}><Check><Tick /></Check><Swatch $color="#a37275" /><b>Uproszczona geometria</b><ChipBox><MemChip c="#7f9db5" /></ChipBox></LayerRow>
                <LayerRow $ls={-0.9}><Check><Tick /></Check><Swatch $color="#bdce4e" /><b>swamp</b></LayerRow>
              </TreeList>
            </TreeBox>
          </LeftDock>
          <Canvas />
        </Workspace>
        <StatusBar>
          <SearchBox><SearchIcon /><span>Szukana fraza (Ctrl+K)</span></SearchBox>
          <StatusText $w={146}>Współrzędne</StatusText>
          <StatusField $w={242} $h={39} $mr={4} $pl={6}><span>-17437508,8070133</span></StatusField>
          <IconSlot $w={29}><Mouse /></IconSlot>
          <StatusText $w={61}>Skala</StatusText>
          <StatusField $w={159} $h={41} $mr={11} $pl={3}><span>1:7298341</span><FieldSide $w={20}><Arrow $s={3.5} /></FieldSide></StatusField>
          <IconSlot $w={22}><Lock /></IconSlot>
          <StatusText $w={149} $ls={-0.8}>Powiększenie</StatusText>
          <StatusField $w={132} $mr={11} $pl={4}><span>100%</span><Spin /></StatusField>
          <StatusText $w={71}>Obrót</StatusText>
          <StatusField $w={129} $h={39} $mr={6} $pl={4}><span>0,0 °</span><Spin /></StatusField>
          <IconSlot $w={19}><Check><Tick /></Check></IconSlot>
          <StatusText $w={117} $ls={-0.6}>Renderuj</StatusText>
          <IconSlot $w={20}><Crs /></IconSlot>
          <StatusText $w={153} $ls={-0.6}>EPSG:2964</StatusText>
          <Bubble />
        </StatusBar>
      </MainWindow>
      <GroupStats />
    </Desktop>
  );
}
